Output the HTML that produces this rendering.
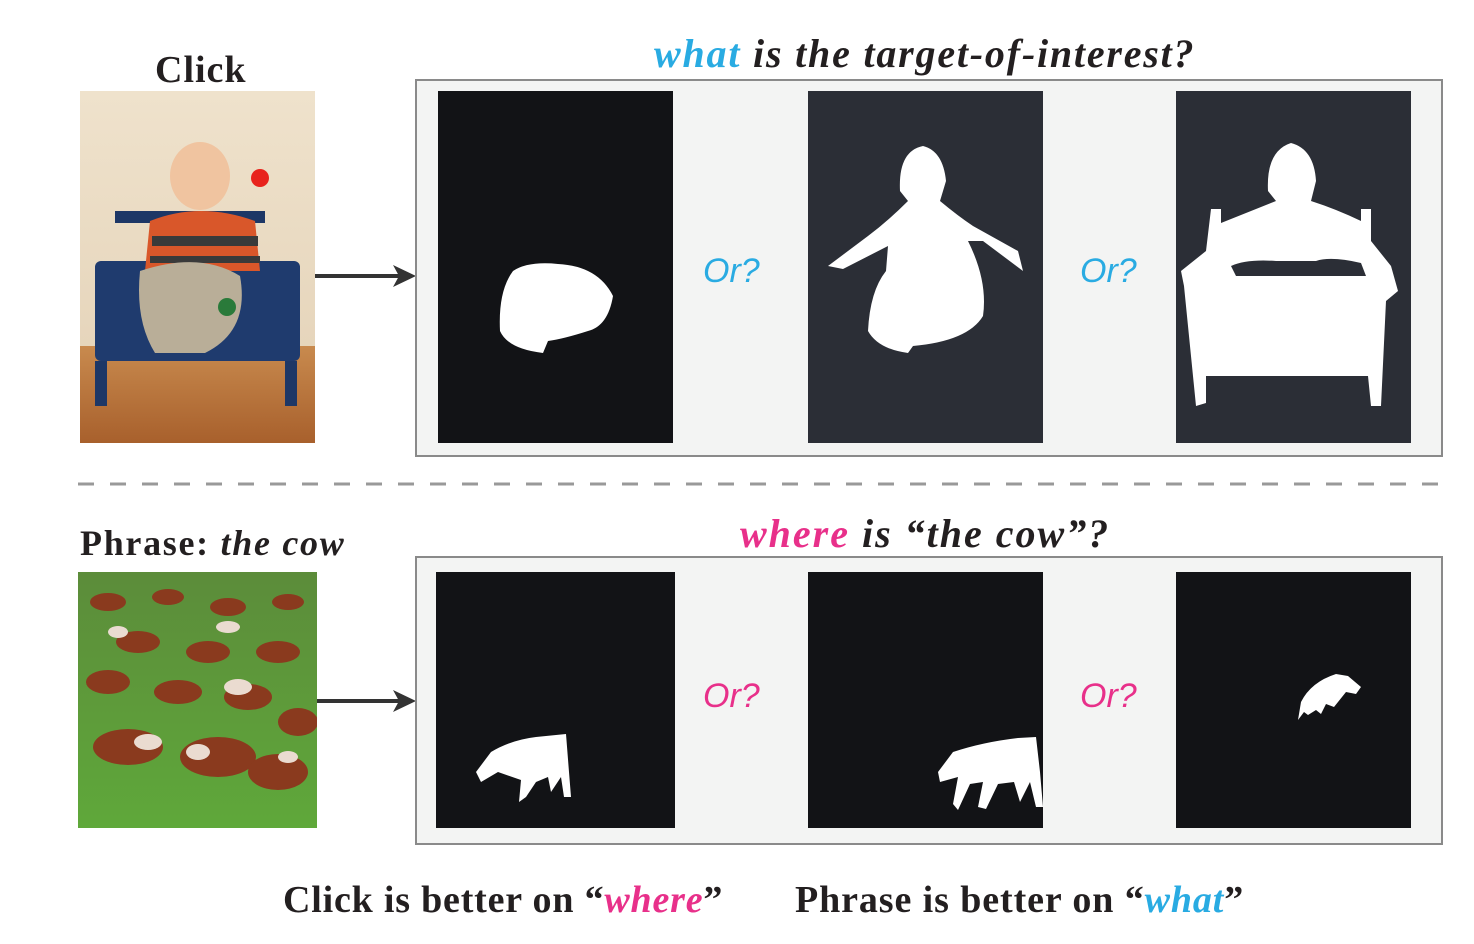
<!DOCTYPE html>
<html><head><meta charset="utf-8"><style>
body{margin:0;width:1474px;height:944px;background:#fff;position:relative;overflow:hidden;font-family:"Liberation Serif",serif;color:#231f20}
.a{position:absolute}
.t{font-weight:bold;white-space:nowrap}
.or{font-family:"Liberation Sans",sans-serif;font-style:italic;font-size:34px;position:absolute}
.box{position:absolute;background:#f3f4f3;border:2px solid #8a8a8a;box-sizing:border-box}
.p{position:absolute}
</style></head><body>
<div class="a t" style="left:155px;top:48px;font-size:38px;letter-spacing:1px">Click</div>
<div class="a t" style="left:654px;top:30px;font-size:40px;font-style:italic;letter-spacing:1.8px"><span style="color:#29abe2">what</span> is the target-of-interest?</div>

<!-- baby photo -->
<svg class="a" style="left:80px;top:91px" width="235" height="352">
<defs><linearGradient id="wall" x1="0" y1="0" x2="0" y2="1"><stop offset="0" stop-color="#efe2cc"/><stop offset="1" stop-color="#e3d1b6"/></linearGradient>
<linearGradient id="floor" x1="0" y1="0" x2="0" y2="1"><stop offset="0" stop-color="#c88a4e"/><stop offset="1" stop-color="#a8602c"/></linearGradient></defs>
<rect width="235" height="352" fill="url(#wall)"/>
<rect y="255" width="235" height="97" fill="url(#floor)"/>
<rect x="35" y="120" width="150" height="12" fill="#1d3766"/>
<rect x="15" y="170" width="205" height="100" rx="6" fill="#1f3b6e"/>
<rect x="15" y="270" width="12" height="45" fill="#1d3766"/><rect x="205" y="270" width="12" height="45" fill="#1d3766"/>
<ellipse cx="120" cy="85" rx="30" ry="34" fill="#f0c4a0"/>
<path d="M70 130 Q120 110 175 130 L180 180 L65 180Z" fill="#d9572a"/>
<path d="M72 145 L178 145 L178 155 L72 155Z M70 165 L180 165 L180 172 L70 172Z" fill="#3a3a3a"/>
<path d="M60 180 Q120 160 160 185 Q170 240 125 262 L75 262 Q55 230 60 180Z" fill="#b9ae98"/>
<circle cx="180" cy="87" r="9" fill="#e8231d"/>
<circle cx="147" cy="216" r="9" fill="#2a7a3a"/>
</svg>
<svg class="a" style="left:315px;top:263px" width="102" height="26"><line x1="0" y1="13" x2="90" y2="13" stroke="#333" stroke-width="4"/><path d="M78 2 L101 13 L78 24 L84 13Z" fill="#333"/></svg>

<div class="box" style="left:415px;top:79px;width:1028px;height:378px"></div>
<svg class="p" style="left:438px;top:91px" width="235" height="352"><rect width="235" height="352" fill="#121316"/><path d="M75 180 Q90 170 120 173 Q160 175 175 205 Q170 235 150 240 Q125 248 110 250 L105 262 Q70 258 62 240 Q60 200 75 180Z" fill="#fff"/></svg>
<div class="or" style="left:703px;top:252px;color:#29abe2">Or?</div>
<svg class="p" style="left:808px;top:91px" width="235" height="352"><rect width="235" height="352" fill="#2b2e36"/><path d="M115 55 Q135 60 138 90 L132 110 Q150 125 165 135 L210 160 L215 180 L175 150 L160 150 Q180 190 175 225 Q160 250 105 255 L100 262 Q70 258 60 240 Q62 200 78 180 L80 155 L35 178 L20 175 L60 145 Q80 130 100 110 L92 100 Q90 60 115 55Z" fill="#fff"/></svg>
<div class="or" style="left:1080px;top:252px;color:#29abe2">Or?</div>
<svg class="p" style="left:1176px;top:91px" width="235" height="352"><rect width="235" height="352" fill="#2b2e36"/><path d="M115 52 Q138 58 140 90 L135 110 Q160 118 185 130 L185 118 L195 118 L195 150 L215 175 L222 200 L210 210 L205 315 L195 315 L192 285 L30 285 L30 312 L20 315 L8 195 L5 180 L30 160 L35 118 L45 118 L45 132 Q75 120 100 110 L92 100 Q90 60 115 52Z" fill="#fff"/><path d="M55 175 L60 185 L190 185 L185 172 Q155 165 140 170 L100 170 Q70 168 55 175Z" fill="#2b2e36"/></svg>

<svg class="a" style="left:78px;top:480px" width="1366" height="8"><line x1="0" y1="4" x2="1366" y2="4" stroke="#999" stroke-width="3" stroke-dasharray="16 16"/></svg>

<div class="a t" style="left:80px;top:522px;font-size:36px;letter-spacing:1.7px">Phrase: <i>the cow</i></div>
<div class="a t" style="left:740px;top:510px;font-size:40px;font-style:italic;letter-spacing:2px"><span style="color:#e8308a">where</span> is “the cow”?</div>

<!-- cow photo -->
<svg class="a" style="left:78px;top:572px" width="239" height="256">
<defs><linearGradient id="g" x1="0" y1="0" x2="0" y2="1"><stop offset="0" stop-color="#5c8c3a"/><stop offset="1" stop-color="#5fa83a"/></linearGradient></defs>
<rect width="239" height="256" fill="url(#g)"/>
<g fill="#8a3a1e"><ellipse cx="30" cy="30" rx="18" ry="9"/><ellipse cx="90" cy="25" rx="16" ry="8"/><ellipse cx="150" cy="35" rx="18" ry="9"/><ellipse cx="210" cy="30" rx="16" ry="8"/><ellipse cx="60" cy="70" rx="22" ry="11"/><ellipse cx="130" cy="80" rx="22" ry="11"/><ellipse cx="200" cy="80" rx="22" ry="11"/><ellipse cx="30" cy="110" rx="22" ry="12"/><ellipse cx="100" cy="120" rx="24" ry="12"/><ellipse cx="170" cy="125" rx="24" ry="13"/><ellipse cx="220" cy="150" rx="20" ry="14"/><ellipse cx="50" cy="175" rx="35" ry="18"/><ellipse cx="140" cy="185" rx="38" ry="20"/><ellipse cx="200" cy="200" rx="30" ry="18"/></g>
<g fill="#eadbd0"><ellipse cx="40" cy="60" rx="10" ry="6"/><ellipse cx="150" cy="55" rx="12" ry="6"/><ellipse cx="160" cy="115" rx="14" ry="8"/><ellipse cx="70" cy="170" rx="14" ry="8"/><ellipse cx="120" cy="180" rx="12" ry="8"/><ellipse cx="210" cy="185" rx="10" ry="6"/></g>
</svg>
<svg class="a" style="left:317px;top:688px" width="100" height="26"><line x1="0" y1="13" x2="88" y2="13" stroke="#333" stroke-width="4"/><path d="M76 2 L99 13 L76 24 L82 13Z" fill="#333"/></svg>

<div class="box" style="left:415px;top:556px;width:1028px;height:289px"></div>
<svg class="p" style="left:436px;top:572px" width="239" height="256"><rect width="239" height="256" fill="#121316"/><path d="M40 200 L55 180 Q75 168 100 165 L130 162 L133 200 L135 225 L128 225 L125 205 L115 220 L112 205 L100 210 L90 225 L83 230 L85 208 L62 200 L45 210Z" fill="#fff"/></svg>
<div class="or" style="left:703px;top:677px;color:#e8308a">Or?</div>
<svg class="p" style="left:808px;top:572px" width="235" height="256"><rect width="235" height="256" fill="#121316"/><path d="M130 200 L145 180 Q175 170 210 166 L228 165 L232 200 L235 235 L228 235 L222 210 L212 230 L206 210 L190 212 L178 237 L170 235 L175 210 L162 212 L150 238 L145 232 L150 205 L132 210Z" fill="#fff"/></svg>
<div class="or" style="left:1080px;top:677px;color:#e8308a">Or?</div>
<svg class="p" style="left:1176px;top:572px" width="235" height="256"><rect width="235" height="256" fill="#121316"/><path d="M125 130 Q135 110 160 102 L172 104 L185 115 L180 122 L170 120 L158 135 L150 132 L145 142 L140 138 L132 143 L128 140 L122 148Z" fill="#fff"/></svg>

<div class="a t" style="left:283px;top:878px;font-size:38px;letter-spacing:0.8px">Click is better on “<i style="color:#e8308a">where</i>”</div>
<div class="a t" style="left:795px;top:878px;font-size:38px;letter-spacing:0.9px">Phrase is better on “<i style="color:#29abe2">what</i>”</div>
</body></html>
